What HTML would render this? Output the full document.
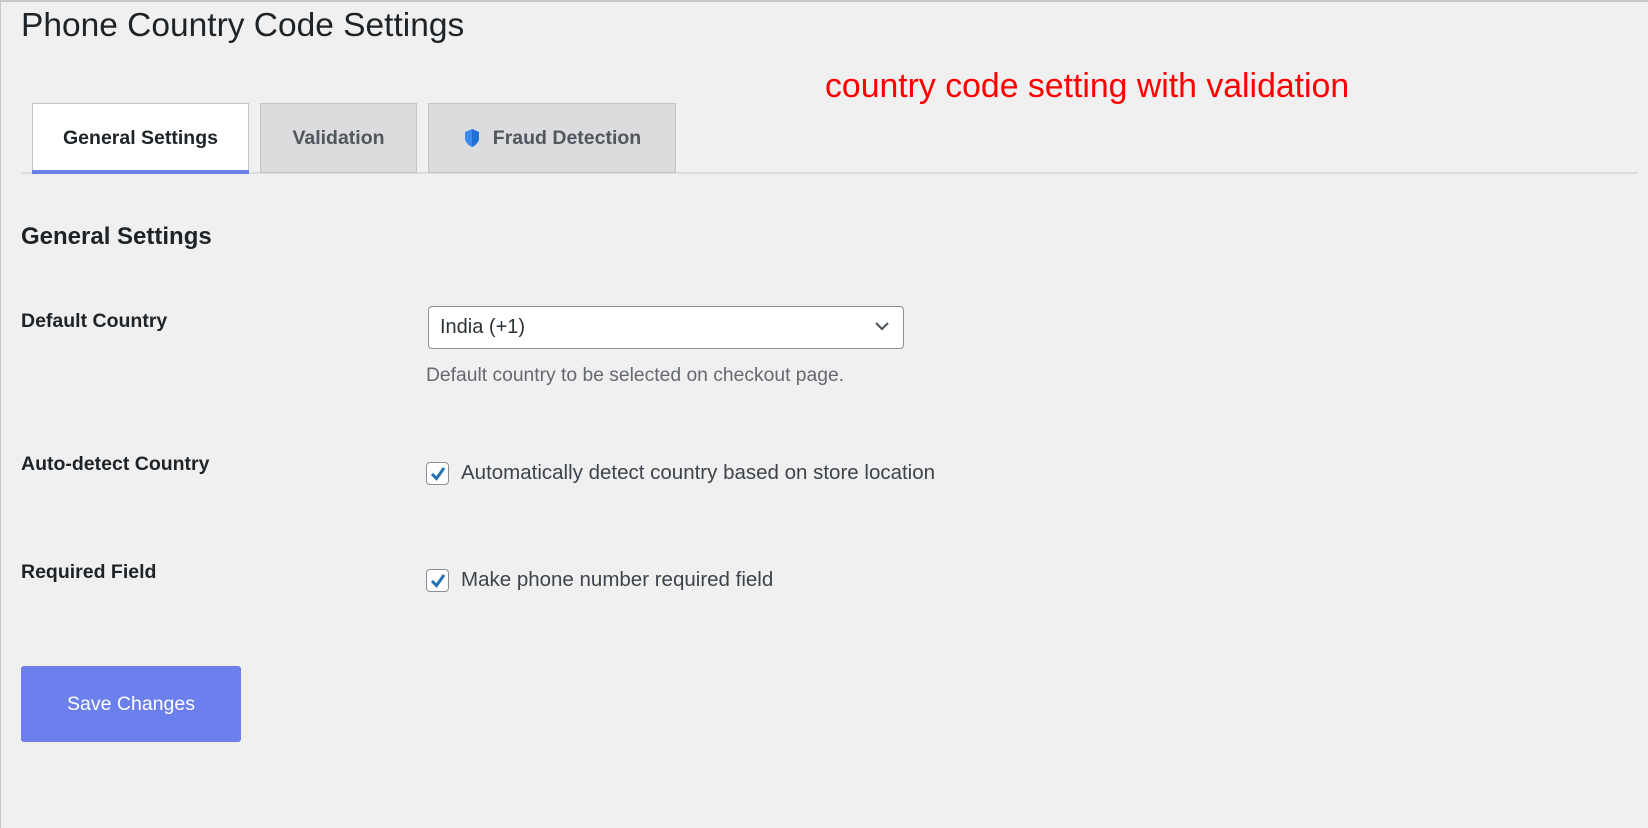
<!DOCTYPE html>
<html><head><meta charset="utf-8"><style>
*{box-sizing:border-box;margin:0;padding:0}
body{width:1648px;height:828px;background:#f0f0f1;font-family:"Liberation Sans",sans-serif;color:#1d2327;position:relative;overflow:hidden;border-top:2px solid #c8c8c8;border-left:1px solid #c8c8c8}
.a{position:absolute;white-space:nowrap}
.tab{position:absolute;top:101px;height:70px;border:1px solid #c3c4c7;background:#dcdcde;font-size:19.5px;font-weight:bold;color:#50575e;display:flex;align-items:center;justify-content:center}
.lbl{font-size:19.5px;font-weight:bold;left:20px}
.cb{position:absolute;left:425px;width:23px;height:23px;border:1px solid #8c8f94;border-radius:4px;background:#fff}
.cb svg{position:absolute;left:2px;top:2px}
.ct{font-size:20.5px;color:#3c434a;left:460px}
</style></head><body>
<div class="a" style="left:20px;top:5px;font-size:33.5px;color:#1d2327">Phone Country Code Settings</div>
<div class="a" style="left:824px;top:65px;font-size:33.8px;color:#ff0000">country code setting with validation</div>
<div style="position:absolute;left:20px;top:170px;width:1617px;height:2px;background:#dcdcde"></div>
<div class="tab" style="left:31px;width:217px;background:#fff;color:#1d2327;border-bottom:none;height:70px"><span>General Settings</span></div>
<div style="position:absolute;left:31px;top:168px;width:217px;height:4px;background:#6b7fe8"></div>
<div class="tab" style="left:259px;width:157px">Validation</div>
<div class="tab" style="left:427px;width:248px"><svg width="18" height="20" viewBox="0 0 18 20" style="margin-right:12px"><path d="M9 1 L16 4 V10 C16 14 13 17 9 19 C5 17 2 14 2 10 V4 Z" fill="#3b8beb"/><path d="M9 1 L16 4 V10 C16 14 13 17 9 19 Z" fill="#1f6fd6"/></svg>Fraud Detection</div>
<div class="a" style="left:20px;top:221px;font-size:24px;font-weight:bold">General Settings</div>
<div class="a lbl" style="top:308px">Default Country</div>
<div style="position:absolute;left:427px;top:304px;width:476px;height:43px;background:#fff;border:1px solid #8c8f94;border-radius:4px"></div>
<div class="a" style="left:439px;top:314px;font-size:20px;color:#2c3338">India (+1)</div>
<svg class="a" style="left:873px;top:318px" width="16" height="12" viewBox="0 0 16 12"><path d="M2 3 L8 9 L14 3" fill="none" stroke="#50575e" stroke-width="2.2"/></svg>
<div class="a" style="left:425px;top:363px;font-size:19.3px;color:#646970">Default country to be selected on checkout page.</div>
<div class="a lbl" style="top:451px">Auto-detect Country</div>
<div class="cb" style="top:460px"><svg width="18" height="18" viewBox="0 0 18 18"><path d="M3 9 L7.5 13.5 L15 3" fill="none" stroke="#2271b1" stroke-width="3"/></svg></div>
<div class="a ct" style="top:459px">Automatically detect country based on store location</div>
<div class="a lbl" style="top:559px">Required Field</div>
<div class="cb" style="top:567px"><svg width="18" height="18" viewBox="0 0 18 18"><path d="M3 9 L7.5 13.5 L15 3" fill="none" stroke="#2271b1" stroke-width="3"/></svg></div>
<div class="a ct" style="top:566px">Make phone number required field</div>
<div style="position:absolute;left:20px;top:664px;width:220px;height:76px;background:#6b7fed;border-radius:3px;color:#fff;font-size:19.5px;display:flex;align-items:center;justify-content:center">Save Changes</div>
</body></html>
